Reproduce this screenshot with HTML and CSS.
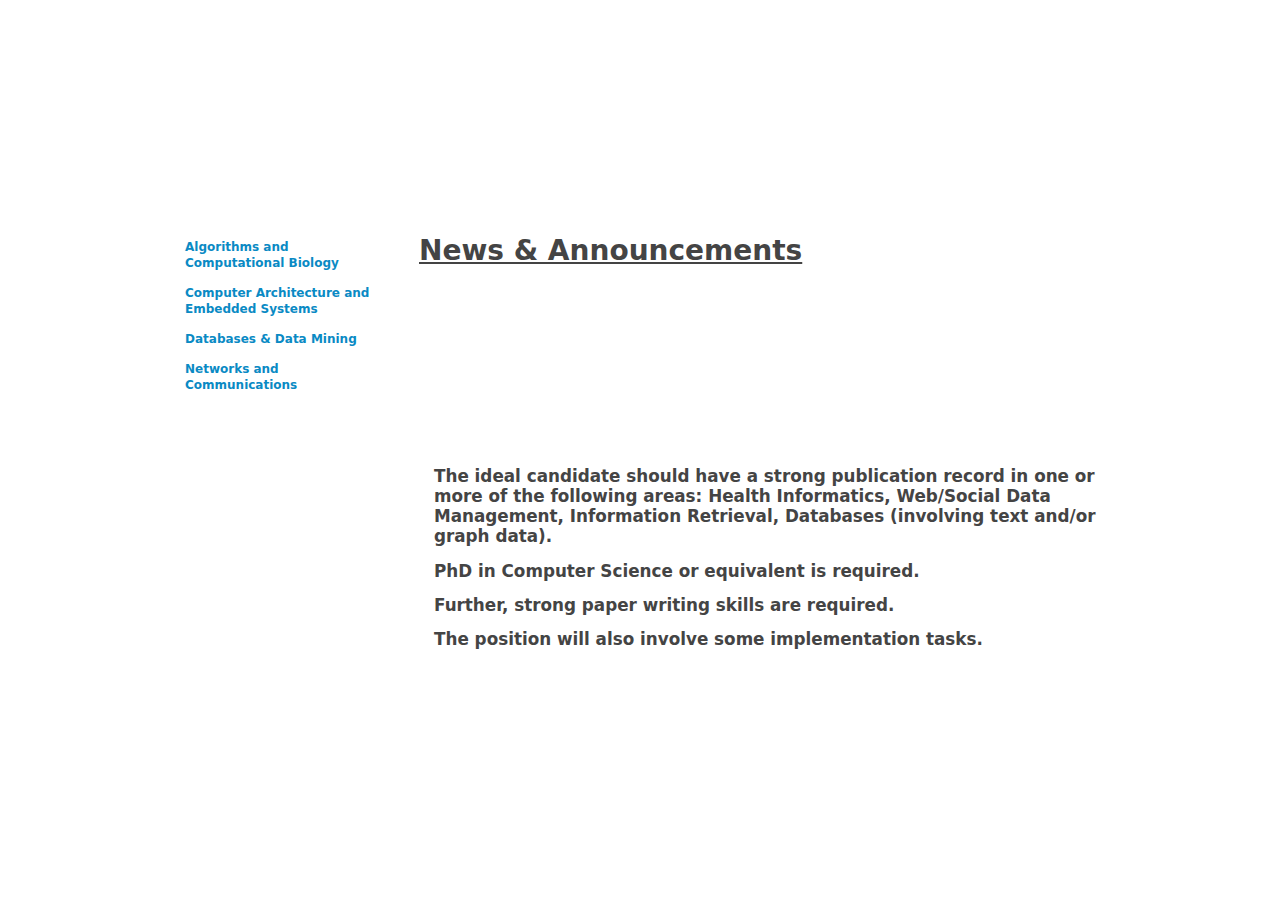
FILE: index.html
```html
<!DOCTYPE html>
<html lang="en">
<head>
<meta charset="utf-8">
<title>News &amp; Announcements</title>
<link rel="stylesheet" href="styles.css">
</head>
<body>
<div class="page">
  <div class="banner"></div>
  <div class="layout">
    <nav class="sidebar">
      <a class="side-link" href="#">Algorithms and<br>Computational Biology</a>
      <a class="side-link" href="#">Computer Architecture and<br>Embedded Systems</a>
      <a class="side-link" href="#">Databases &amp; Data Mining</a>
      <a class="side-link" href="#">Networks and<br>Communications</a>
    </nav>
    <main class="main">
      <h1 class="title"><a href="#">News &amp; Announcements</a></h1>
      <div class="article">
        <p>The ideal candidate should have a strong publication record in one or more of the following areas: Health Informatics, Web/Social Data Management, Information Retrieval, Databases (involving text and/or graph data).</p>
        <p>PhD in Computer Science or equivalent is required.</p>
        <p>Further, strong paper writing skills are required.</p>
        <p>The position will also involve some implementation tasks.</p>
      </div>
    </main>
  </div>
</div>
</body>
</html>
```
FILE: styles.css
```css
html, body {
  margin: 0;
  padding: 0;
  background: #fff;
}
body {
  font-family: "DejaVu Sans", sans-serif;
  font-weight: bold;
  color: #444;
}
.page {
  width: 1280px;
}
.banner {
  height: 235px;
}
.layout {
  display: flex;
  align-items: flex-start;
}
.sidebar {
  display: flex;
  flex-direction: column;
  gap: 14px;
  width: 234px;
  padding-left: 185px;
  padding-top: 4px;
  box-sizing: content-box;
}
.side-link {
  font-size: 12px;
  line-height: 16px;
  color: #0a8ac4;
  text-decoration: none;
}
.main {
  width: 690px;
}
.title {
  margin: 0;
  font-size: 28px;
  line-height: 32px;
}
.title a {
  color: #444;
  text-decoration: underline;
}
.article {
  padding-left: 15px;
  padding-top: 199px;
}
.article p {
  margin: 0 0 14px;
  font-size: 16.8px;
  line-height: 1.2;
}
```
